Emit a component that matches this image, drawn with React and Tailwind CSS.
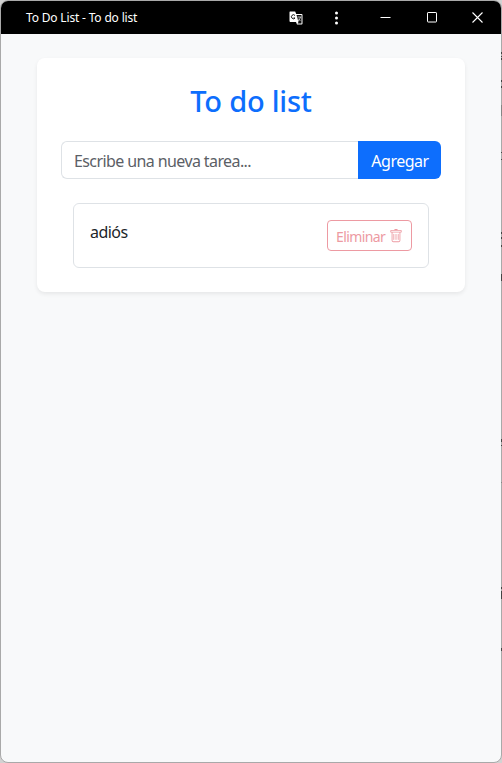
import { BsTrash } from "react-icons/bs";

function TitleBar() {
  return (
    <header className="flex h-[33px] shrink-0 items-center bg-black text-white">
      <span className="ml-[25px] flex-1 whitespace-nowrap text-[12px] leading-4 tracking-[-0.17px]">To Do List - To do list</span>
      <svg className="mr-[31px] h-[14px] w-[14px]" viewBox="0 0 14 14" fill="none">
        <path d="M1 0.5h5.2l1 2.5H12.5q1 0 1 1v8.500q0 1-1 1H8l-1-2.500H1.500q-1 0-1-1v-8.500q0-1 .5-1Z" fill="#fff" />
        <path d="M7.500 4h5v8.500H8.500l1-1.500Z" fill="#111" />
        <path d="M6 4.500A2 2 0 1 0 6 7H4.500" stroke="#000" strokeWidth=".9" />
        <path d="M8.500 6H12M11.500 6q-.5 2.500-2.500 4M9 7.500l2.500 2.500" stroke="#ddd" strokeWidth=".8" />
      </svg>
      <svg className="mr-[42px] h-[14px] w-[4px]" viewBox="0 0 4 14" fill="#fff">
        <circle cx="2.500" cy="2" r="1.500" /><circle cx="2.500" cy="7" r="1.500" /><circle cx="2.500" cy="12" r="1.500" />
      </svg>
      <svg className="mr-[35px] h-[11px] w-[11px]" viewBox="0 0 11 11" stroke="#fff"><path d="M.5 5.500h10" /></svg>
      <svg className="mr-[35px] h-[11px] w-[11px]" viewBox="0 0 11 11" stroke="#fff" fill="none"><rect x="1.500" y=".5" width="9" height="9.500" rx=".6" /></svg>
      <svg className="mr-[18px] h-[11px] w-[11px]" viewBox="0 0 11 11" stroke="#fff" strokeWidth="1.100"><path d="M.5.5l10 10M10.500.5l-10 10" /></svg>
    </header>
  );
}

/* Slivers of the window behind, visible along the right edge. */
function BackgroundEdge() {
  return (
    <svg className="absolute right-0 top-0 h-[763px] w-px" viewBox="0 0 1 763" stroke="#444" strokeWidth="1">
      <path d="M.5 52v2M.5 56v1M.5 58v2M.5 80v2M.5 86v2M.5 152v1M.5 159v1M.5 232v2M.5 237v2M.5 245v2M.5 274v7M.5 439v3M.5 445v1M.5 587v2M.5 591v8M.5 648v3" />
      <path d="M.5 105v11M.5 482v1" stroke="#858585" />
    </svg>
  );
}

export default function App() {
  return (
    <div className="relative h-[763px] w-[502px] overflow-hidden bg-[#d2d2d2] font-['Noto_Sans','Open_Sans',sans-serif]">
      <div className="flex h-[763px] w-[502px] flex-col overflow-hidden rounded-[8px] border border-[#a9a9a9] bg-[#f8f9fa]">
        <TitleBar />
        <main className="mx-9 mt-6 flex h-[234px] flex-col rounded-[8px] bg-white px-6 pt-6 shadow-[0_2px_4px_rgba(0,0,0,0.075)]">
          <h1 className="h-[35px] whitespace-nowrap text-center text-[29px] font-medium leading-[38px] tracking-[-0.22px] text-[#0d6efd]">To do list</h1>
          <div className="mt-6 flex h-[38px]">
            <input aria-label="Nueva tarea" placeholder="Escribe una nueva tarea..." className="min-w-0 flex-1 rounded-l-[6px] border border-r-0 border-[#dee2e6] px-3 pt-px text-[16px] tracking-[-0.6px] placeholder:text-[#5b6066] placeholder:opacity-100" />
            <button className="w-[83px] rounded-r-[6px] bg-[#0d6efd] pl-px pt-px text-[16px] tracking-[-0.5px] text-white">Agregar</button>
          </div>
          <ul className="mx-3 mt-6">
            <li className="flex h-[65px] items-start justify-between rounded-[6px] border border-[#dee2e6] p-4">
              <span className="text-[16px] leading-[25px] tracking-[-0.55px] text-[#212529]">adiós</span>
              <button className="flex h-[31px] w-[85px] items-center justify-between rounded-[4px] border border-[#ed9aa2] px-2 text-[14px] tracking-[-0.6px] text-[#ed9aa2]">
                <span className="pt-px">Eliminar</span>
                <BsTrash className="h-[14px] w-[14px]" />
              </button>
            </li>
          </ul>
        </main>
      </div>
      <BackgroundEdge />
    </div>
  );
}
